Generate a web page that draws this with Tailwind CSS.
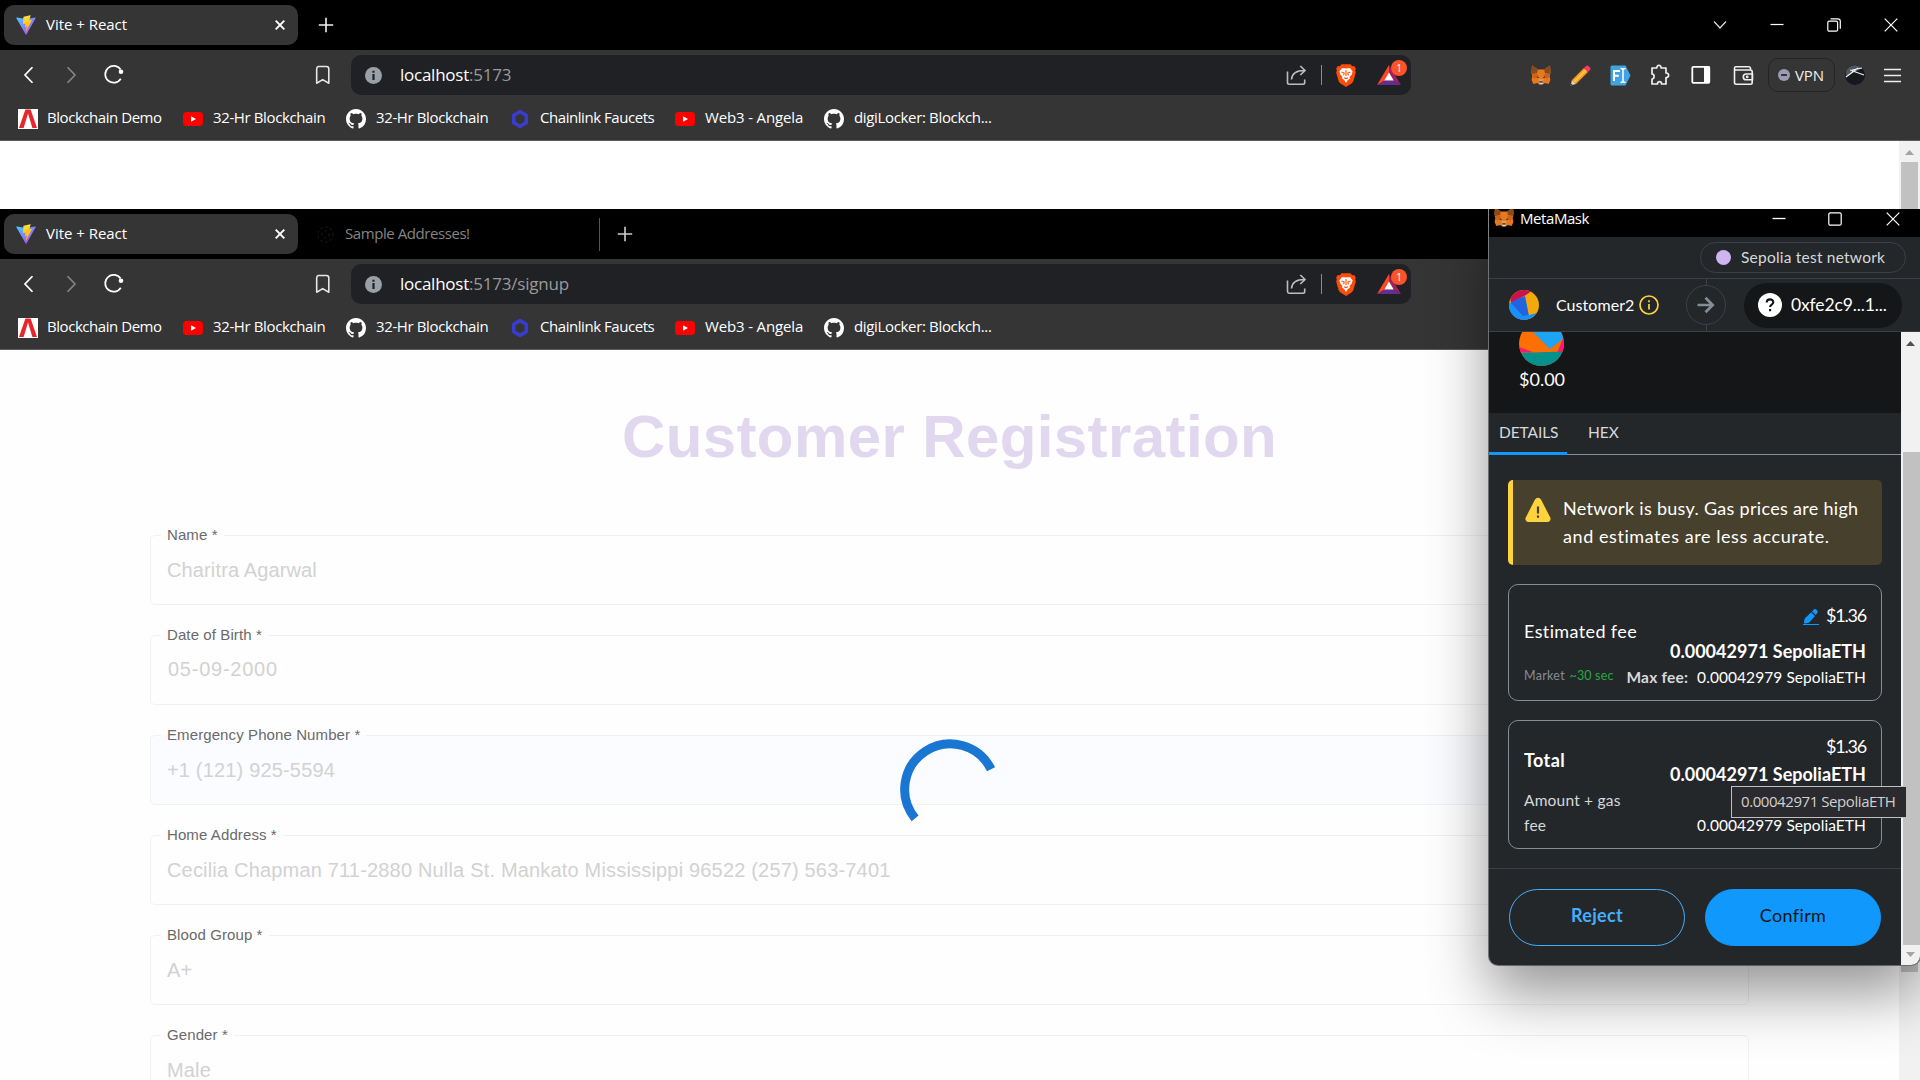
<!DOCTYPE html>
<html lang="en">
<head>
<meta charset="utf-8">
<title>Vite + React</title>
<script src="https://cdn.jsdelivr.net/npm/@tailwindcss/browser@4"></script>
</head>
<body class="relative h-[1080px] w-[1920px] overflow-hidden bg-white font-['Open_Sans',sans-serif]">

<!-- Icon sprite -->
<svg class="absolute size-0" aria-hidden="true">
  <defs>
    <linearGradient id="vg1" x1="6" y1="33" x2="235" y2="344" gradientTransform="translate(0 .94) scale(.1)" gradientUnits="userSpaceOnUse"><stop stop-color="#41D1FF"/><stop offset="1" stop-color="#BD34FE"/></linearGradient>
    <linearGradient id="vg2" x1="195" y1="9" x2="237" y2="293" gradientTransform="translate(0 .94) scale(.085)" gradientUnits="userSpaceOnUse"><stop stop-color="#FFEA83"/><stop offset=".09" stop-color="#FFDD35"/><stop offset="1" stop-color="#FFA800"/></linearGradient>
  </defs>
  <symbol id="vite" viewBox="1.5 1.5 29 29">
    <path fill="url(#vg1)" d="M29.88 6.15 16.74 29.65c-.27.48-.97.49-1.24 0L2.1 6.15c-.3-.53.15-1.16.75-1.06L16 7.44h.24L29.12 5.1c.6-.11 1.05.52.76 1.05z"/>
    <path fill="url(#vg2)" d="m22.26 2-9.72 1.91a.36.36 0 0 0-.29.33l-.6 10.1c-.01.24.2.43.44.37l2.7-.62c.26-.06.49.16.44.42l-.81 3.94c-.05.26.2.49.46.41l1.67-.51c.26-.08.5.15.45.42l-1.28 6.18c-.08.39.44.6.65.27L16.52 25l7.92-15.82c.13-.26-.1-.56-.39-.5l-2.78.53c-.27.05-.49-.2-.42-.45l1.82-6.3c.08-.26-.15-.5-.41-.46z"/>
  </symbol>
  <symbol id="github" viewBox="0 0 16 16"><path fill="#fff" d="M8 0C3.58 0 0 3.58 0 8c0 3.54 2.29 6.53 5.47 7.59.4.07.55-.17.55-.38 0-.19-.01-.82-.01-1.49-2.01.37-2.53-.49-2.69-.94-.09-.23-.48-.94-.82-1.13-.28-.15-.68-.52-.01-.53.63-.01 1.08.58 1.23.82.72 1.21 1.87.87 2.33.66.07-.52.28-.87.51-1.07-1.78-.2-3.64-.89-3.64-3.95 0-.87.31-1.59.82-2.15-.08-.2-.36-1.02.08-2.12 0 0 .67-.21 2.2.82.64-.18 1.32-.27 2-.27s1.36.09 2 .27c1.53-1.04 2.2-.82 2.2-.82.44 1.1.16 1.92.08 2.12.51.56.82 1.27.82 2.15 0 3.07-1.87 3.75-3.65 3.95.29.25.54.73.54 1.48 0 1.07-.01 1.93-.01 2.2 0 .21.15.46.55.38A8.01 8.01 0 0 0 16 8c0-4.42-3.58-8-8-8z"/></symbol>
  <symbol id="youtube" viewBox="0 0 20 20"><rect y="3" width="20" height="14" rx="3.5" fill="#f00"/><path d="M8 7.2v5.6l5-2.8z" fill="#fff"/></symbol>
  <symbol id="demo" viewBox="0 0 20 20"><path fill="#fff" d="M0 0h20v20H0z"/><path fill="#e8252b" d="M7.4.5h5.2L19 19h-4.6L10 4.5 5.6 19H1z"/></symbol>
  <symbol id="chainlink" viewBox="0 0 20 20"><path d="m10 2.6 6.3 3.7v7.4L10 17.4l-6.3-3.7V6.3z" fill="none" stroke="#3a3ccc" stroke-width="3.6"/></symbol>
  <symbol id="fox" viewBox="0 0 20 20">
    <path fill="#e8781e" d="m1 .5 6 4h6l6-4 .6 7-1 3.500.8 4-1.700 4-4-1-2 1.500H8.300l-2-1.500-4 1-1.700-4 .8-4-1-3.500z"/>
    <path fill="#8a4a1e" d="m1 .5 6 4-1 3.500-4.800 1L.3 5.500zM19 .5l-6 4 1 3.500 4.800 1 .9-3.500z"/>
    <path fill="#c9631a" d="m6 8 1.500 4.500L3 13.500 1.400 9.500zM14 8l-1.500 4.500 4.500 1 1.600-4z"/>
    <path fill="#f6a04b" d="m7.500 14 1 3h3l1-3-2.500.6z"/>
    <path fill="#2a3340" d="m6.300 11.200 1.900 1.500-2.100.2zM13.700 11.200l-1.900 1.500 2.100.2z"/>
    <path fill="#cfd3d6" d="M7.800 16h4.400l-.6 3.300H8.400z"/><path fill="#1b1b1f" d="M8.400 16.300h3.200l.3 1.300H8.100z"/>
  </symbol>
  <symbol id="brave" viewBox="0 0 20 23">
    <path fill="#fb4d0a" d="M5.500.3h9l1.700 1.900 2-.2 1.600 2.600-.6 1.800.6 2.100-2.400 8.600c-.4 1.200-1.300 2-2.300 2.700L10 22.900l-5.100-3.100c-1-.7-1.900-1.500-2.300-2.700L.2 8.500l.6-2.100L.2 4.600 1.800 2l2 .2z"/>
    <path fill="#fff" d="m6 4 4 .6L14 4l2.600 3.400-1 3.300-2 2 .3 2-2.100 1.200-1.800 3-1.800-3-2.100-1.200.3-2-2-2-1-3.300z"/>
    <path fill="none" stroke="#fb4d0a" stroke-width="1.100" d="m5.500 8 2.700 1-.6 2.300M14.500 8l-2.700 1 .6 2.300M10 6v6M8 13.700l2 .9 2-.9"/>
  </symbol>
</svg>

<!-- Shared parts of a browser window: toolbar and bookmarks bar -->
<template id="chrome-template">
  <div class="flex h-[50px] items-center text-white">
    <svg class="ml-[21px] size-4 shrink-0" viewBox="0 0 16 16" fill="none" stroke="#fff" stroke-width="1.700"><path d="M11.500.2 4 8l7.500 7.800"/></svg>
    <svg class="ml-[26px] size-4 shrink-0" viewBox="0 0 16 16" fill="none" stroke="#868686" stroke-width="1.600"><path d="M4.500.2 12 8l-7.500 7.800"/></svg>
    <svg class="ml-[24px] size-[22px] shrink-0" viewBox="0 0 22 22" fill="none" stroke="#fff" stroke-width="1.700"><path d="M17.600 5.600A8.400 8.400 0 1 0 17.800 14.700"/><circle cx="18" cy="7.800" r="2.300" fill="#fff" stroke="none"/></svg>
    <svg class="ml-[190px] h-[20px] w-[16px] shrink-0" viewBox="0 0 16 20" fill="none" stroke="#e6e6e6" stroke-width="1.600" stroke-linejoin="round"><path d="M3 1.500h8.500a2.300 2.300 0 0 1 2.300 2.300V18.200L7.700 14.600l-6 3.600V3.800A2.300 2.300 0 0 1 3.500 1.500z"/></svg>
    <div class="ml-[20px] flex h-10 w-[1060px] shrink-0 items-center rounded-[10px] bg-[#202124]">
      <svg class="ml-[14px] size-[17px]" viewBox="0 0 17 17"><circle cx="8.500" cy="8.500" r="8.500" fill="#9aa0a6"/><path d="M7.400 7h2.200v6H7.400zM7.400 3.700h2.200v2.100H7.400z" fill="#202124"/></svg>
      <div class="ml-[18px] w-[880px] whitespace-nowrap pb-px text-[17px] leading-6 tracking-[-0.25px] text-[#9a9a9a]"><span class="text-white">localhost</span><span class="address-rest tracking-[-0.2px]"></span></div>
      <svg class="ml-[6px] size-[21px] shrink-0" viewBox="0 0 21 21" fill="none" stroke="#bdbdbd" stroke-width="1.600"><path d="M1.500 6.500V17.500a1.700 1.700 0 0 0 1.700 1.700H17a1.700 1.700 0 0 0 1.700-1.700V14.500M5.500 14.500c.4-5.500 4-9 13-9M14.300 1l4.700 4.500-4.700 4.500"/></svg>
      <div class="ml-[14px] h-5 w-px bg-[#8a8a8a]"></div>
      <svg class="ml-[14px] h-[23px] w-[20px] shrink-0"><use href="#brave"/></svg>
      <div class="relative ml-[21px] h-5 w-6">
        <svg class="h-5 w-6" viewBox="0 0 24 20"><path fill="#ff4724" d="M12 0 0 20l8-4.500L12 8z"/><path fill="#9e1f63" d="m12 0 12 20-8-4.500L12 8z"/><path fill="#662d91" d="M0 20h24l-8-4.500H8z"/><path fill="#fff" d="m12 7.500 4.700 8H7.300z"/></svg>
        <div class="absolute left-[14px] top-[-5px] flex size-[16px] items-center justify-center rounded-full bg-[#fb542b] text-[10px] leading-none text-white">1</div>
      </div>
    </div>
    <div class="extensions contents"></div>
  </div>
  <div class="flex h-10 items-center pb-[7px] pl-[18px] text-[15px] leading-5 tracking-[-0.45px] text-white">
    <div class="flex w-[165px] items-center gap-[9px] whitespace-nowrap"><svg class="mt-[4px] size-5 shrink-0"><use href="#demo"/></svg>Blockchain Demo</div>
    <div class="flex w-[163px] items-center gap-[10px] whitespace-nowrap tracking-[-0.38px]"><svg class="mt-[4px] size-5 shrink-0"><use href="#youtube"/></svg>32-Hr Blockchain</div>
    <div class="flex w-[164px] items-center gap-[10px] whitespace-nowrap tracking-[-0.38px]"><svg class="mt-[4px] size-5 shrink-0"><use href="#github"/></svg>32-Hr Blockchain</div>
    <div class="flex w-[165px] items-center gap-[10px] whitespace-nowrap"><svg class="mt-[4px] size-5 shrink-0"><use href="#chainlink"/></svg>Chainlink Faucets</div>
    <div class="flex w-[149px] items-center gap-[10px] whitespace-nowrap tracking-[-0.15px]"><svg class="mt-[4px] size-5 shrink-0"><use href="#youtube"/></svg>Web3 - Angela</div>
    <div class="flex items-center gap-[10px] whitespace-nowrap tracking-[-0.34px]"><svg class="mt-[4px] size-5 shrink-0"><use href="#github"/></svg>digiLocker: Blockch...</div>
  </div>
</template>

<template id="extensions-template">
  <svg class="ml-[120px] size-5 shrink-0"><use href="#fox"/></svg>
  <svg class="ml-[19px] size-[21px] shrink-0" viewBox="0 0 21 21"><path fill="#fb9c1b" d="M14 3l4 4L6 19l-4-4z"/><path fill="#ffc04d" d="m15.300 4.300 1.400 1.400L4.700 17.700l-1.400-1.400z"/><path fill="#ff3366" d="m14 3 2-2a1.800 1.800 0 0 1 2.500 0L20 2.500a1.800 1.800 0 0 1 0 2.500l-2 2z"/><path fill="#e8d0a8" d="m2 15 4 4-5.500 1.500z"/><path fill="#3a3a3a" d="m1 18.500 1.700 1.400-2.200.6z"/></svg>
  <svg class="ml-[19px] size-[21px] shrink-0" viewBox="0 0 21 21"><path fill="#40a3e4" d="M2 .5h13.500l5 10-5 10H2A1.500 1.500 0 0 1 .5 19V2A1.500 1.500 0 0 1 2 .5z"/><path fill="none" stroke="#fff" stroke-width="2" d="M4 16V6h6M4 10.800h4.800"/><path fill="none" stroke="#fff" stroke-width="1.500" d="M10.500 3.500c1.500 0 2.500.5 2.500 1.500v11c0 1-1 1.500-2.500 1.500M15.500 3.500C14 3.500 13 4 13 5M15.500 17.500c-1.500 0-2.500-.5-2.500-1.500"/></svg>
  <svg class="ml-[18px] size-[22px] shrink-0" viewBox="0 0 22 22" fill="none" stroke="#f0f0f0" stroke-width="1.700" stroke-linejoin="round"><path d="M3 4h4.800c-.3-3.500 4.600-3.500 4.300 0H17v5c3.500-.3 3.500 4.800 0 4.500V20h-4.500c.2-3.200-4.200-3.200-4 0H3v-5c2.800 0 2.800-5 0-5z"/></svg>
  <svg class="ml-[20px] size-[20px] shrink-0" viewBox="0 0 20 20"><rect x="1.300" y="1.800" width="17" height="16" rx="1" fill="none" stroke="#fff" stroke-width="1.800"/><path fill="#fff" d="M13 1.500h6v16.500h-6z"/></svg>
  <svg class="ml-[22px] size-[21px] shrink-0" viewBox="0 0 21 21" fill="none" stroke="#f0f0f0" stroke-width="1.600"><path d="M17.500 5V3.500A1.700 1.700 0 0 0 15.800 1.800H3A1.600 1.600 0 0 0 3 5h14.500A1.700 1.700 0 0 1 19.200 6.700V17.500a1.700 1.700 0 0 1-1.700 1.700H3.200A1.700 1.700 0 0 1 1.500 17.500V3.500M19.500 9h-6.300a2.800 2.800 0 0 0 0 5.800h6.300z"/><circle cx="14.200" cy="11.900" r=".6"/></svg>
  <div class="ml-[14px] flex h-[34px] w-[67px] shrink-0 items-center rounded-[10px] border border-[#242424] pl-[9px] text-[15px] tracking-[-0.1px] text-[#efefef]">
    <span class="mr-[5px] flex size-3 items-center justify-center rounded-full bg-[#9a9cb4]"><span class="h-[1.5px] w-[6px] bg-[#353535]"></span></span>VPN
  </div>
  <svg class="ml-[10px] size-[20px] shrink-0" viewBox="0 0 20 20"><circle cx="10" cy="10" r="10" fill="#15181c"/><path fill="#4c5560" d="M1 6A10 10 0 0 1 17 3l-7 4-9 4z"/><path d="m1 12 12-9M5 5l14 5M7 5l10-2" stroke="#eee" stroke-width="1.200"/></svg>
  <svg class="ml-[19px] h-[16px] w-[18px] shrink-0" viewBox="0 0 18 16" stroke="#eee" stroke-width="1.500"><path d="M0 2.500h17M0 8.500h17M0 14.500h17"/></svg>
</template>

<!-- Back browser window -->
<section class="absolute left-0 top-0 h-[209px] w-[1920px] overflow-hidden bg-black">
  <div class="flex h-[50px] items-center pl-1">
    <div class="flex h-10 w-[294px] items-center rounded-[10px] bg-[#353535] pl-[12px] text-[15px] tracking-[-0.03px] text-white">
      <svg class="mr-[10px] size-5"><use href="#vite"/></svg><span class="pb-[2px]">Vite + React</span>
      <svg class="ml-auto mr-[13px] size-[10px]" viewBox="0 0 10 10" stroke="#fff" stroke-width="1.900"><path d="m.7.7 8.600 8.600M9.300.7.7 9.300"/></svg>
    </div>
    <svg class="ml-[20px] size-[16px]" viewBox="0 0 16 16" stroke="#f2f2f2" stroke-width="1.600"><path d="M8 .8v14.400M.8 8h14.400"/></svg>
    <div class="ml-auto flex items-center pr-[22px]">
      <svg class="size-[14px]" viewBox="0 0 14 14" fill="none" stroke="#ddd" stroke-width="1.200"><path d="m1 3.500 6 6.500 6-6.500"/></svg>
      <svg class="ml-[43px] size-[14px]" viewBox="0 0 14 14" stroke="#fff" stroke-width="1.200"><path d="M.5 6.500h13"/></svg>
      <svg class="ml-[43px] size-[14px]" viewBox="0 0 14 14" fill="none" stroke="#fff" stroke-width="1.200"><rect x=".8" y="3.200" width="9.800" height="10" rx="1.500"/><path d="M3.500.8h7.300a2.500 2.500 0 0 1 2.500 2.500v7.500"/></svg>
      <svg class="ml-[43px] size-[14px]" viewBox="0 0 14 14" stroke="#fff" stroke-width="1.200"><path d="m.7.700 12.600 12.600M13.300.7.700 13.300"/></svg>
    </div>
  </div>
  <div class="h-[91px] border-b border-[#5c5c5c] bg-[#353535]" data-chrome data-rest=":5173" data-ext="yes"></div>
  <div class="flex h-[68px] justify-end bg-white">
    <div class="flex w-[21px] flex-col items-center bg-[#f1f1f1]">
      <svg class="mt-[9px] h-[5px] w-[9px]" viewBox="0 0 9 5"><path fill="#a3a3a3" d="M4.500 0 9 5H0z"/></svg>
      <div class="mt-[7px] w-[17px] grow bg-[#c1c1c1]"></div>
    </div>
  </div>
</section>

<!-- Front browser window -->
<section class="absolute left-0 top-[209px] flex h-[871px] w-[1920px] flex-col overflow-hidden bg-black">
  <div class="flex h-[50px] shrink-0 items-center pl-1">
    <div class="flex h-10 w-[294px] items-center rounded-[10px] bg-[#353535] pl-[12px] text-[15px] tracking-[-0.03px] text-white">
      <svg class="mr-[10px] size-5"><use href="#vite"/></svg><span class="pb-[2px]">Vite + React</span>
      <svg class="ml-auto mr-[13px] size-[10px]" viewBox="0 0 10 10" stroke="#fff" stroke-width="1.900"><path d="m.7.7 8.600 8.600M9.300.7.7 9.300"/></svg>
    </div>
    <div class="flex h-[33px] w-[302px] items-center border-r border-[#555] pl-[18px] text-[15px] tracking-[-0.43px] text-[#848484]">
      <svg class="mr-[10px] size-[19px]" viewBox="0 0 19 19" fill="none" stroke="#131313" stroke-width="1.500" stroke-dasharray="2 3"><circle cx="9.500" cy="9.500" r="7.500"/><circle cx="9.500" cy="9.500" r="3.500"/></svg><span class="pb-[2px]">Sample Addresses!</span>
    </div>
    <svg class="ml-[17px] size-[16px]" viewBox="0 0 16 16" stroke="#ccc" stroke-width="1.600"><path d="M8 .8v14.400M.8 8h14.400"/></svg>
  </div>
  <div class="h-[91px] shrink-0 border-b border-[#5c5c5c] bg-[#353535]" data-chrome data-rest=":5173/signup"></div>

  <!-- Registration page -->
  <div class="relative flex grow bg-[#fefefe] font-['Liberation_Sans',Arial,sans-serif]">
    <main class="w-[1899px] px-[150px]">
      <h1 class="mt-[52px] text-center text-[60px] font-bold leading-[70px] tracking-[0.4px] text-[#e1d8ef]">Customer Registration</h1>
      <form id="fields" class="mt-[53px] flex flex-col gap-[20px]"></form>
    </main>
    <div class="w-[21px] bg-[#f1f1f1] px-[2px]"><div class="h-[622px] bg-[#c1c1c1]"></div></div>
    <svg class="absolute left-[900px] top-[389px] size-[100px]" viewBox="0 0 100 100" fill="none" stroke="#1976d2" stroke-width="9"><path d="M15.100 79.300A45.500 45.500 0 1 1 91 30.200"/></svg>
  </div>
</section>

<!-- MetaMask window -->
<section class="absolute left-[1489px] top-[209px] flex h-[756px] w-[431px] flex-col rounded-b-[9px] bg-[#24272a] font-['Lato',sans-serif] text-white shadow-[0_28px_60px_rgba(0,0,0,0.42),0_0_0_1px_#8d8d8d] [clip-path:inset(0_-1px_-115px_-100px)]">
  <div class="flex h-[28px] shrink-0 items-start bg-black pl-[5px] font-['Open_Sans',sans-serif]">
    <svg class="mt-[-2px] size-5"><use href="#fox"/></svg>
    <span class="ml-[6px] text-[15px] leading-[18px] tracking-[-0.43px]">MetaMask</span>
    <div class="ml-auto mt-[3px] flex pr-[20px]">
      <svg class="size-[14px]" viewBox="0 0 14 14" stroke="#fff" stroke-width="1.300"><path d="M.5 6.500h13"/></svg>
      <svg class="ml-[42px] size-[14px]" viewBox="0 0 14 14" fill="none" stroke="#fff" stroke-width="1.200"><rect x=".8" y=".8" width="12.400" height="12.400" rx="1.500"/></svg>
      <svg class="ml-[44px] size-[14px]" viewBox="0 0 14 14" stroke="#fff" stroke-width="1.200"><path d="m.7.700 12.600 12.600M13.300.7.700 13.300"/></svg>
    </div>
  </div>
  <div class="flex h-[42px] shrink-0 items-center justify-end border-b border-[#3b4046] pr-[14px]">
    <div class="flex h-[31px] w-[206px] items-center rounded-full border border-[#3b4046] pl-[15px] text-[15.5px] tracking-[0.22px] text-[#d6d9dc]"><span class="mr-[10px] size-[15px] rounded-full bg-[#cfb5f0]"></span>Sepolia test network</div>
  </div>
  <div class="flex h-[53px] shrink-0 items-center border-b border-[#3b4046] pl-[20px]">
    <svg class="size-[30px] shrink-0" viewBox="0 0 30 30"><clipPath id="c1"><circle cx="15" cy="15" r="15"/></clipPath><g clip-path="url(#c1)"><path fill="#f3a80c" d="M0 0h30v30H0z"/><path fill="#c8144c" d="M0 0h24l-7 5L2 13z"/><path fill="#2362e1" d="M2 12 16 6l4 20-8 4H0z"/><path fill="#1890f5" d="M0 13h2l12 13 6-1 8-2v7H0z"/></g></svg>
    <span class="ml-[17px] w-[83px] text-[16px] tracking-[0.05px]">Customer2</span>
    <svg class="size-[20px] shrink-0" viewBox="0 0 20 20" fill="none" stroke="#ffd33d" stroke-width="1.700"><circle cx="10" cy="10" r="9"/><path d="M10 9v5.500M10 5.300v2"/></svg>
    <div class="ml-[27px] flex h-full w-10 flex-col items-center">
      <div class="w-px grow bg-[#3b4046]"></div>
      <div class="flex size-10 shrink-0 items-center justify-center rounded-full border border-[#3b4046]"><svg class="size-[18px]" viewBox="0 0 18 18" fill="none" stroke="#848c96" stroke-width="2.700"><path d="M.5 9h15.500M8.500 1.800 15.700 9 8.500 16.200"/></svg></div>
      <div class="w-px grow bg-[#3b4046]"></div>
    </div>
    <div class="ml-[18px] flex h-[45px] w-[158px] items-center rounded-full bg-[#141618] pl-[14px] text-[17.500px] tracking-[-0.12px]">
      <svg class="mr-[9px] size-6 shrink-0" viewBox="0 0 24 24"><circle cx="12" cy="12" r="12" fill="#fff"/><path d="M8.700 9.600c0-4.300 6.600-4.200 6.600-.3 0 2.200-3.200 2.400-3.200 4.700M12.100 16v2.300" fill="none" stroke="#141618" stroke-width="2.100"/></svg>0xfe2c9...1...
    </div>
  </div>

  <div class="flex min-h-0 grow">
    <div class="flex w-[412px] flex-col">
      <div class="flex h-[81px] shrink-0 flex-col bg-[#141618] pl-[30px]">
        <svg class="h-[34px] w-[45px]" viewBox="0 0 45 34"><clipPath id="c2"><circle cx="22.500" cy="11.500" r="22.500"/></clipPath><g clip-path="url(#c2)"><path fill="#fc6f00" d="M0 0h45v34H0z"/><path fill="#1ba5f4" d="M14 0h31v6L31 17z"/><path fill="#fb1870" d="M45 4v17h-7zM0 15l15 5.500H0z"/><path fill="#04908c" d="m0 21 15-.5 30-1V34H0z"/></g></svg>
        <div class="mt-px text-[18px] leading-6">$0.00</div>
      </div>
      <div class="flex h-[42px] shrink-0 border-b border-[#848c96] text-[15.500px] text-[#d6d9dc]">
        <div class="mb-[-1px] w-[78px] border-b-[3px] border-[#1098fc] pl-[10px] leading-[38px] tracking-[-0.1px]">DETAILS</div>
        <div class="ml-[21px] leading-[38px]">HEX</div>
      </div>
      <div class="flex grow flex-col px-[19px] pt-[25px]">
        <div class="flex h-[85px] rounded-[5px] border-l-[5px] border-[#ffd33d] bg-[#47402d] pl-[12px] pt-[14px]">
          <svg class="mt-[3px] size-[26px] shrink-0" viewBox="0 0 26 26"><path fill="#ffd33d" d="M10 2.500a3.400 3.400 0 0 1 6 0l9 17.500a3.200 3.200 0 0 1-3 5H4a3.200 3.200 0 0 1-3-5z"/><path stroke="#47402d" stroke-width="2.200" d="M13 9.500v7M13 18.500v2.200"/></svg>
          <div class="ml-[12px] whitespace-nowrap text-[18px] leading-[28px] tracking-[0.3px]">Network is busy. Gas prices are high<br><span class="tracking-[0.57px]">and estimates are less accurate.</span></div>
        </div>

        <div class="mt-[19px] flex h-[117px] justify-between rounded-[10px] border border-[#848c96] px-[15px]">
          <div class="w-0 whitespace-nowrap pt-[32px]">
            <div class="text-[18px] leading-[28px] tracking-[0.38px]">Estimated fee</div>
            <div class="mt-[21px] text-[12.500px] leading-5 tracking-[0.3px] text-[#848c96]">Market <span class="ml-px tracking-[0.15px] text-[#28a745]">~30 sec</span></div>
          </div>
          <div class="flex flex-col items-end whitespace-nowrap pt-[16px]">
            <div class="flex items-center text-[18px] leading-[28px] tracking-[-1.2px]">
              <svg class="mr-[7px] mt-[4px] size-4" viewBox="0 0 16 16" fill="#1098fc"><path d="M8.200 3.200 12 7l-5.500 6.200c-.3.300-.7.600-1.200.6l-3 .6c-.9.100-1.500-.5-1.300-1.300L1.600 10c.1-.4.300-.8.600-1.100zM9 2.400l1.300-1.500c1.200-1.200 2.400-1 3.500.1s1.300 2.200.1 3.500L12.800 6zM0 15h16v1H0z"/></svg>$1.36
            </div>
            <div class="mt-[9px] text-[18px] font-bold leading-[26px] tracking-[0.02px]">0.00042971 SepoliaETH</div>
            <div class="mt-px text-[15.500px] leading-6 tracking-[0.07px]"><span class="mr-[9px] font-bold tracking-[0.2px] text-[#d6d9dc]">Max fee:</span>0.00042979 SepoliaETH</div>
          </div>
        </div>

        <div class="mt-[19px] flex h-[129px] justify-between rounded-[10px] border border-[#848c96] px-[15px]">
          <div class="w-[110px] pt-[25px]">
            <div class="text-[18px] font-bold leading-[28px] tracking-[0.4px]">Total</div>
            <div class="mt-[14px] text-[15.500px] leading-[25px] tracking-[0.2px] text-[#d6d9dc]">Amount + gas fee</div>
          </div>
          <div class="flex flex-col items-end whitespace-nowrap pt-[11px]">
            <div class="text-[18px] leading-[28px] tracking-[-1.2px]">$1.36</div>
            <div class="text-[18px] font-bold leading-[28px] tracking-[0.02px]">0.00042971 SepoliaETH</div>
            <div class="mt-[25px] text-[15.500px] leading-6 tracking-[0.07px]">0.00042979 SepoliaETH</div>
          </div>
        </div>
      </div>
      <div class="flex h-[97px] shrink-0 justify-between border-t border-[#3b4046] px-[20px] pt-[20px] text-[18px] leading-[51px] tracking-[0.35px]">
        <div class="h-[57px] w-[176px] rounded-full border border-[#43aefc] text-center font-bold text-[#43aefc]">Reject</div>
        <div class="h-[57px] w-[176px] rounded-full border border-[#1098fc] bg-[#1098fc] text-center text-[#141618]">Confirm</div>
      </div>
    </div>
    <div class="flex w-[19px] flex-col items-center rounded-br-[9px] bg-[#f1f1f1]">
      <svg class="mt-[9px] h-[5px] w-[9px]" viewBox="0 0 9 5"><path fill="#505050" d="M4.500 0 9 5H0z"/></svg>
      <div class="ml-[2px] mt-[106px] w-[17px] grow bg-[#c1c1c1]"></div>
      <svg class="mb-[8px] mt-[7px] h-[5px] w-[9px]" viewBox="0 0 9 5"><path fill="#a3a3a3" d="M4.500 5 9 0H0z"/></svg>
    </div>
  </div>
  <!-- Native tooltip -->
  <div class="absolute left-[242px] top-[577px] h-[32px] w-[176px] whitespace-nowrap border border-[#c0c0c0] bg-[#2b2b2f] pl-[9px] font-['Open_Sans',sans-serif] text-[15px] leading-[29px] tracking-[-0.43px] text-[#d0d0d0]">0.00042971 SepoliaETH</div>
</section>

<script>
  document.querySelectorAll('[data-chrome]').forEach(function (bar) {
    bar.append(document.getElementById('chrome-template').content.cloneNode(true));
    bar.querySelector('.address-rest').textContent = bar.dataset.rest;
    if (bar.dataset.ext) bar.querySelector('.extensions').append(document.getElementById('extensions-template').content.cloneNode(true));
  });

  var fields = [
    ['Name', 'Charitra Agarwal', 'mt-[13px] pl-[6px] tracking-[0.13px]'],
    ['Date of Birth', '05-09-2000', 'mt-[12px] pl-[7px] tracking-[0.75px]'],
    ['Emergency Phone Number', '+1 (121) 925-5594', 'mt-[13px] pl-[6px] tracking-[0.17px]', true],
    ['Home Address', 'Cecilia Chapman 711-2880 Nulla St. Mankato Mississippi 96522 (257) 563-7401', 'mt-[13px] pl-[6px] tracking-[0.18px]'],
    ['Blood Group', 'A+', 'mt-[13px] pl-[6px] tracking-[0.17px]'],
    ['Gender', 'Male', 'mt-[13px] pl-[6px] tracking-[0.17px]']
  ];
  document.getElementById('fields').innerHTML = fields.map(function (f) {
    return '<fieldset class="h-[80px] shrink-0 rounded-[5px] border border-[#f1f1f2] px-[10px] ' + (f[3] ? 'bg-[#fbfcff]' : '') + '">' +
      '<legend class="h-[20px] px-[6px] text-[15px] leading-[20px] tracking-[0.1px] text-[#6a6a6a]">' + f[0] + ' *</legend>' +
      '<div class="whitespace-nowrap text-[20px] leading-[24px] text-[#d2d2d2] ' + f[2] + '">' + f[1] + '</div></fieldset>';
  }).join('');
</script>
</body>
</html>
